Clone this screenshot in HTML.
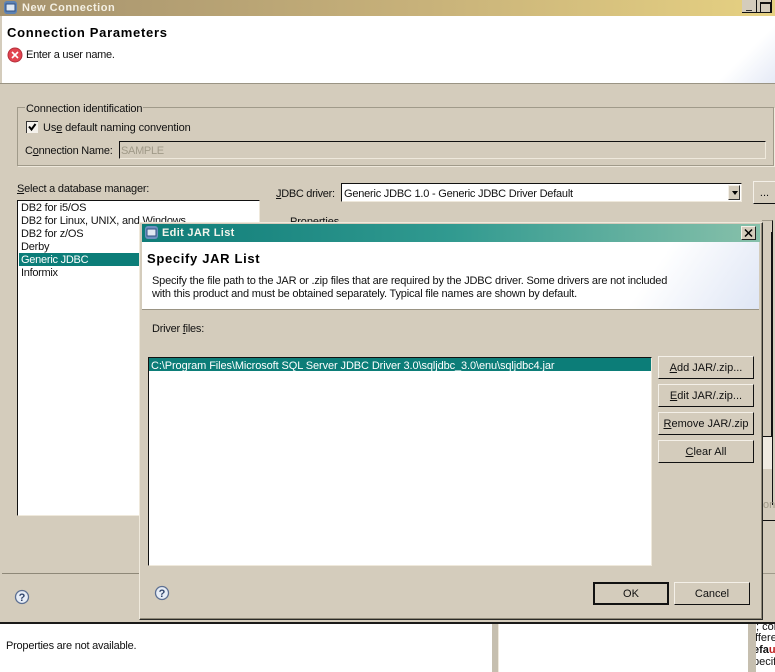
<!DOCTYPE html>
<html><head><meta charset="utf-8"><style>
html,body{margin:0;padding:0;width:775px;height:672px;overflow:hidden;background:#d4ccbc}
body{position:relative;font-family:"Liberation Sans",sans-serif;font-size:11px;color:#111}
.a,.t{position:absolute}
.t{white-space:nowrap;line-height:13px}
.b{position:absolute;box-sizing:border-box;background:#d4ccbc;border:1px solid;border-color:#f4f0e8 #111 #111 #f4f0e8;text-align:center;line-height:22px;white-space:nowrap}
u{text-underline-offset:1px}
</style></head><body>
<!-- main window title -->
<div class="a" style="left:0;top:0;width:775px;height:16px;background:linear-gradient(90deg,#a5926e,#c8b27a 55%,#e6d182)"></div>
<svg class="a" style="left:3px;top:0" width="16" height="15"><rect x="1" y="1" width="13" height="13" rx="3" fill="#5d83b5"/><rect x="3" y="4" width="9" height="7" fill="#dfe8f2" stroke="#2f4f82"/></svg>
<div class="t" style="left:22px;top:2px;font-weight:bold;color:#f4f0e4;letter-spacing:.5px">New Connection</div>
<div class="a" style="left:742px;top:0;width:15px;height:13px;background:#d4ccbc;border-right:1px solid #111;border-bottom:1px solid #111;box-sizing:border-box"></div>
<div class="a" style="left:746px;top:10px;width:6px;height:1px;background:#333"></div>
<div class="a" style="left:757px;top:0;width:15px;height:13px;background:#d4ccbc;border-bottom:1px solid #111;border-right:1px solid #111;box-sizing:border-box"></div>
<div class="a" style="left:760px;top:2px;width:9px;height:8px;border:1px solid #111;border-top-width:2px"></div>
<!-- banner -->
<div class="a" style="left:2px;top:16px;width:773px;height:67px;background:linear-gradient(135deg,#fff 93%,#e5eaf6 100%)"></div>
<div class="a" style="left:0;top:83px;width:775px;height:1px;background:#9a9484"></div>
<div class="t" style="left:7px;top:25px;font-size:13px;font-weight:bold;color:#000;line-height:15px;letter-spacing:.7px">Connection Parameters</div>
<svg class="a" style="left:7px;top:47px" width="16" height="16"><circle cx="8" cy="8" r="7" fill="#e2434f" stroke="#b5303c"/><path d="M5 5l6 6M11 5l-6 6" stroke="#fff" stroke-width="1.6"/></svg>
<div class="t" style="left:26px;top:49px;letter-spacing:-.27px">Enter a user name.</div>
<!-- group -->
<div class="a" style="left:17px;top:107px;width:755px;height:57px;border:1px solid #a09a8a;box-shadow:1px 1px 0 #efe9dc"></div>
<div class="t" style="left:25px;top:103px;background:#d4ccbc;padding:0 1px;letter-spacing:-.14px">Connection identification</div>
<div class="a" style="left:26px;top:121px;width:12px;height:12px;background:#f5f2ec;border-top:1px solid #333;border-left:1px solid #333;box-sizing:border-box"></div>
<svg class="a" style="left:26px;top:121px" width="12" height="12"><path d="M3 5.5l2.5 3L9.5 3" fill="none" stroke="#000" stroke-width="2"/></svg>
<div class="t" style="left:43px;top:122px;letter-spacing:-.12px">Us<u>e</u> default naming convention</div>
<div class="t" style="left:25px;top:145px;letter-spacing:-.22px">C<u>o</u>nnection Name:</div>
<div class="a" style="left:119px;top:141px;width:647px;height:18px;box-sizing:border-box;border:1px solid #efe9dc;border-top:1px solid #111;border-left:1px solid #111"></div>
<div class="t" style="left:121px;top:145px;color:#a09a88;letter-spacing:-.3px">SAMPLE</div>
<!-- db manager -->
<div class="t" style="left:17px;top:183px;letter-spacing:-.21px"><u>S</u>elect a database manager:</div>
<div class="a" style="left:17px;top:200px;width:243px;height:316px;box-sizing:border-box;background:#fff;border-top:1px solid #111;border-left:1px solid #111;border-right:1px solid #efe9dc;border-bottom:1px solid #efe9dc"></div>
<div class="a" style="left:19px;top:253px;width:121px;height:13px;background:#0c7d78"></div>
<div class="t" style="left:21px;top:202px;letter-spacing:-.2px">DB2 for i5/OS</div>
<div class="t" style="left:21px;top:215px;letter-spacing:-.2px">DB2 for Linux, UNIX, and Windows</div>
<div class="t" style="left:21px;top:228px;letter-spacing:-.2px">DB2 for z/OS</div>
<div class="t" style="left:21px;top:241px;letter-spacing:-.2px">Derby</div>
<div class="t" style="left:21px;top:254px;color:#fff;letter-spacing:-.25px">Generic JDBC</div>
<div class="t" style="left:21px;top:267px;letter-spacing:-.3px">Informix</div>
<!-- JDBC -->
<div class="t" style="left:276px;top:188px;letter-spacing:-.3px"><u>J</u>DBC driver:</div>
<div class="a" style="left:341px;top:183px;width:401px;height:19px;box-sizing:border-box;background:#fff;border-top:1px solid #111;border-left:1px solid #111;border-right:1px solid #efe9dc;border-bottom:1px solid #efe9dc"></div>
<div class="t" style="left:344px;top:188px;letter-spacing:-.22px">Generic JDBC 1.0 - Generic JDBC Driver Default</div>
<div class="a" style="left:728px;top:185px;width:12px;height:15px;box-sizing:border-box;background:#d4ccbc;border:1px solid;border-color:#f4f0e8 #333 #333 #f4f0e8"></div>
<div class="a" style="left:732px;top:191px;border:3px solid transparent;border-top:4px solid #000"></div>
<div class="b" style="left:753px;top:181px;width:22px;height:23px;border-right:0">...</div>
<div class="t" style="left:290px;top:216px;letter-spacing:-.1px">Properties</div>
<!-- right side under dialog -->
<div class="a" style="left:762px;top:220px;width:11px;height:285px;box-sizing:border-box;border-right:1px solid #111;border-top:1px solid #a09a8a;background:#d4ccbc"></div>
<div class="a" style="left:763px;top:232px;width:9px;height:205px;box-sizing:border-box;border:1px solid #111;border-left:0;border-top:0"></div>
<div class="a" style="left:763px;top:437px;width:9px;height:32px;background:#efeae0"></div>
<div class="t" style="left:763px;top:499px;color:#a09a88">on</div>
<div class="a" style="left:762px;top:520px;width:13px;height:1px;background:#111"></div>
<div class="a" style="left:762px;top:573px;width:13px;height:1px;background:#a09a8a"></div>
<!-- separator + bottom panels -->
<div class="a" style="left:2px;top:573px;width:137px;height:1px;background:#8e8878"></div>
<svg class="a" style="left:14px;top:589px" width="16" height="16"><circle cx="8" cy="8" r="6.5" fill="#e7edf6" stroke="#5c6f92" stroke-width="1.3"/><text x="8" y="12" font-family="Liberation Sans" font-size="11" font-weight="bold" text-anchor="middle" fill="#31456c">?</text></svg>
<div class="a" style="left:0;top:622px;width:775px;height:2px;background:#1a1a18"></div>
<div class="a" style="left:0;top:624px;width:492px;height:48px;background:#fff"></div>
<div class="a" style="left:492px;top:624px;width:7px;height:48px;background:#c6bfaf;border-right:1px solid #efe9dc;box-sizing:border-box"></div>
<div class="a" style="left:499px;top:624px;width:249px;height:48px;background:#fff"></div>
<div class="a" style="left:748px;top:624px;width:8px;height:48px;background:#c6bfaf"></div>
<div class="a" style="left:756px;top:624px;width:19px;height:48px;background:#fff;overflow:hidden">
<div class="t" style="left:0;top:-3px">; con</div>
<div class="t" style="left:-1px;top:8px">ffere</div>
<div class="t" style="left:-3px;top:20px;font-weight:bold">efa<span style="color:#c02020">u</span></div>
<div class="t" style="left:-3px;top:32px">pecif</div>
</div>
<div class="t" style="left:6px;top:640px;letter-spacing:-.23px">Properties are not available.</div>

<!-- dialog -->
<div class="a" style="left:139px;top:222px;width:624px;height:398px;box-sizing:border-box;background:#d4ccbc;border:1px solid;border-color:#efe9dc #2a2a26 #2a2a26 #efe9dc;box-shadow:inset -1px -1px 0 #8e8878"></div>
<div class="a" style="left:142px;top:224px;width:618px;height:18px;background:linear-gradient(90deg,#0f7c78,#319a90 50%,#87c0aa)"></div>
<svg class="a" style="left:144px;top:225px" width="15" height="15"><rect x="1" y="1" width="13" height="13" rx="3" fill="#6d90c0"/><rect x="3" y="4" width="9" height="7" fill="#dfe8f2" stroke="#2f4f82"/></svg>
<div class="t" style="left:162px;top:227px;font-weight:bold;color:#f4f4ec;letter-spacing:.32px">Edit JAR List</div>
<div class="a" style="left:741px;top:226px;width:15px;height:14px;box-sizing:border-box;background:#d4ccbc;border:1px solid;border-color:#f4f0e8 #222 #222 #f4f0e8"></div>
<svg class="a" style="left:741px;top:226px" width="15" height="14"><path d="M4 3.5l7 7M11 3.5l-7 7" stroke="#000" stroke-width="1.5"/></svg>
<div class="a" style="left:142px;top:242px;width:617px;height:67px;background:linear-gradient(125deg,#fff 80%,#dfe6f5 100%)"></div>
<div class="a" style="left:142px;top:309px;width:617px;height:1px;background:#9a9484"></div>
<div class="t" style="left:147px;top:251px;font-size:13px;font-weight:bold;color:#000;line-height:15px;letter-spacing:.67px">Specify JAR List</div>
<div class="t" style="left:152px;top:275px;letter-spacing:-.19px">Specify the file path to the JAR or .zip files that are required by the JDBC driver. Some drivers are not included</div>
<div class="t" style="left:152px;top:288px;letter-spacing:-.19px">with this product and must be obtained separately. Typical file names are shown by default.</div>
<div class="t" style="left:152px;top:323px;letter-spacing:-.23px">Driver <u>f</u>iles:</div>
<div class="a" style="left:148px;top:357px;width:504px;height:209px;box-sizing:border-box;background:#fff;border-top:1px solid #111;border-left:1px solid #111;border-right:1px solid #efe9dc;border-bottom:1px solid #efe9dc"></div>
<div class="a" style="left:149px;top:358px;width:502px;height:13px;background:#0c7d78"></div>
<div class="t" style="left:151px;top:360px;color:#fff;letter-spacing:-.1px">C:\Program Files\Microsoft SQL Server JDBC Driver 3.0\sqljdbc_3.0\enu\sqljdbc4.jar</div>
<div class="b" style="left:658px;top:356px;width:96px;height:23px"><u>A</u>dd JAR/.zip...</div>
<div class="b" style="left:658px;top:384px;width:96px;height:23px"><u>E</u>dit JAR/.zip...</div>
<div class="b" style="left:658px;top:412px;width:96px;height:23px"><u>R</u>emove JAR/.zip</div>
<div class="b" style="left:658px;top:440px;width:96px;height:23px"><u>C</u>lear All</div>
<svg class="a" style="left:154px;top:585px" width="16" height="16"><circle cx="8" cy="8" r="6.5" fill="#e7edf6" stroke="#5c6f92" stroke-width="1.3"/><text x="8" y="12" font-family="Liberation Sans" font-size="11" font-weight="bold" text-anchor="middle" fill="#31456c">?</text></svg>
<div class="b" style="left:593px;top:582px;width:76px;height:23px;border:2px solid #111;line-height:20px">OK</div>
<div class="b" style="left:674px;top:582px;width:76px;height:23px">Cancel</div>
</body></html>
